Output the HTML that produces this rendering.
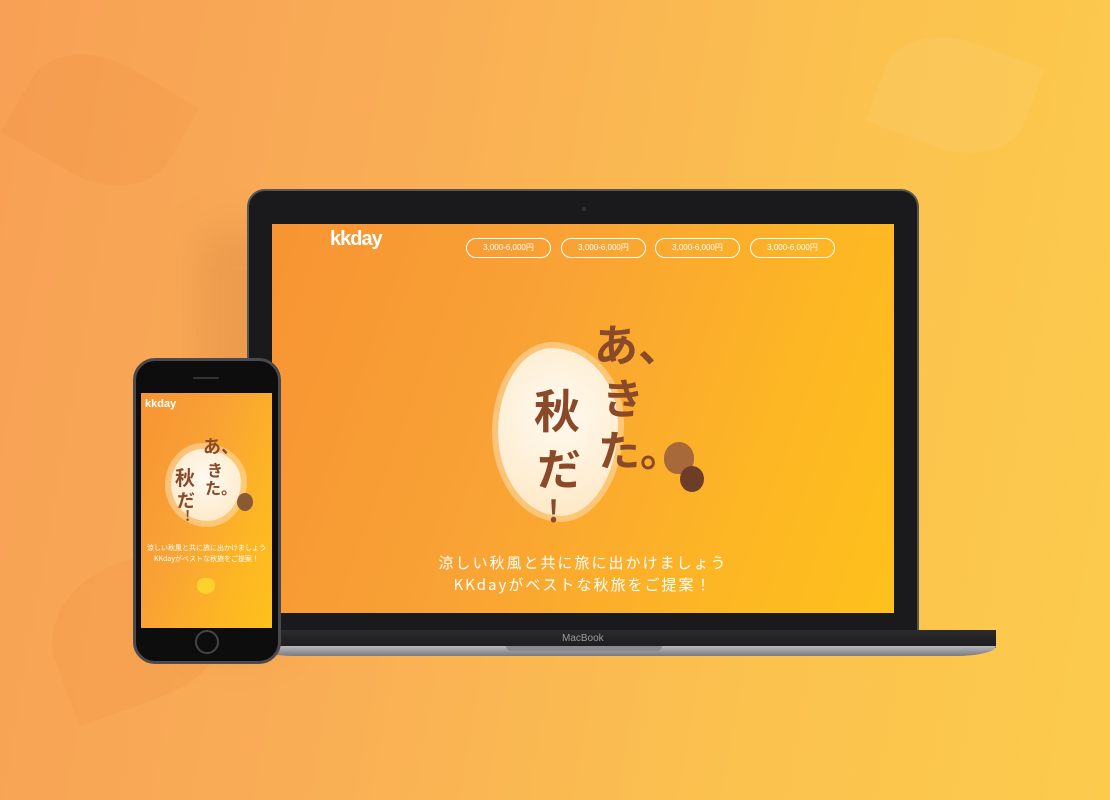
<!DOCTYPE html>
<html><head><meta charset="utf-8"><style>
*{margin:0;padding:0;box-sizing:border-box}
body{width:1110px;height:800px;overflow:hidden;position:relative;font-family:"Liberation Sans","Noto Sans CJK JP",sans-serif;
background:linear-gradient(100deg,#f8a055 0%,#f9ae55 35%,#fbc24e 70%,#fccb4c 100%);}
.abs{position:absolute}
.leaf{position:absolute;border-radius:50% 0 50% 0;background:rgba(230,120,40,.10)}
.scr{background:linear-gradient(110deg,#f79433 0%,#f9a235 40%,#fdb624 75%,#fec11c 100%);overflow:hidden}
.pill{position:absolute;top:14px;width:85px;height:20px;border:1.5px solid #fff;border-radius:10px;color:#fff;font-size:8px;text-align:center;line-height:17px}
.blob{position:absolute;background:radial-gradient(circle at 50% 40%,#fffaf0,#fde6c0);border-radius:45% 55% 48% 52%/50% 45% 55% 50%;box-shadow:0 0 0 6px rgba(255,230,190,.5)}
.jp{position:absolute;color:#8a4a2a;font-family:"Noto Sans CJK JP",sans-serif;font-weight:bold;line-height:1}
</style></head><body>
<div class="leaf" style="left:20px;top:60px;width:160px;height:120px;transform:rotate(30deg)"></div>
<div class="leaf" style="left:50px;top:560px;width:180px;height:140px;transform:rotate(-20deg)"></div>
<div class="leaf" style="left:880px;top:40px;width:150px;height:110px;transform:rotate(20deg);background:rgba(255,255,255,.06)"></div>
<div class="abs" style="left:200px;top:230px;width:80px;height:420px;background:rgba(160,80,30,.15);filter:blur(20px)"></div>
<!-- laptop -->
<div class="abs" style="left:247px;top:189px;width:672px;height:448px;background:#1a1a1c;border-radius:18px 18px 0 0;border:2px solid #55555a"></div>
<div class="abs" style="left:582px;top:207px;width:4px;height:4px;border-radius:50%;background:#333"></div>
<div class="abs" style="left:256px;top:630px;width:740px;height:18px;background:linear-gradient(#2b2b2e,#1c1c1f);"></div>
<div class="abs" style="left:562px;top:633px;color:#9a9a9a;font-size:10px">MacBook</div>
<div class="abs" style="left:256px;top:646px;width:740px;height:10px;background:linear-gradient(#b9b9bd,#7a7a7e);border-radius:0 0 40px 40px/0 0 10px 10px"></div>
<div class="abs" style="left:506px;top:646px;width:156px;height:5px;background:#8c8c90;border-radius:0 0 6px 6px"></div>
<div class="abs scr" style="left:272px;top:224px;width:622px;height:389px">
 <div class="abs" style="left:58px;top:4px;color:#fff;font-size:20px;font-weight:bold;letter-spacing:-1px">kkday</div>
 <div class="pill" style="left:194px">3,000-6,000円</div>
 <div class="pill" style="left:289px">3,000-6,000円</div>
 <div class="pill" style="left:383px">3,000-6,000円</div>
 <div class="pill" style="left:478px">3,000-6,000円</div>
 <div class="blob" style="left:226px;top:124px;width:120px;height:168px"></div>
 <div class="jp" style="left:322px;top:96px;font-size:44px">あ、</div>
 <div class="jp" style="left:262px;top:162px;font-size:46px">秋</div>
 <div class="jp" style="left:330px;top:152px;font-size:42px">き</div>
 <div class="jp" style="left:326px;top:204px;font-size:42px">た。</div>
 <div class="jp" style="left:265px;top:220px;font-size:44px">だ</div>
 <div class="jp" style="left:276px;top:270px;font-size:30px">!</div>
 <div class="abs" style="left:392px;top:218px;width:30px;height:32px;border-radius:50% 50% 45% 45%;background:#a7683a"></div>
 <div class="abs" style="left:408px;top:242px;width:24px;height:26px;border-radius:50%;background:#6e3d28"></div>
 <div class="abs" style="left:0;top:328px;width:622px;text-align:center;color:#fff;font-size:15px;letter-spacing:2px;line-height:22px;font-family:'Noto Sans CJK JP',sans-serif">涼しい秋風と共に旅に出かけましょう<br>KKdayがベストな秋旅をご提案！</div>
</div>
<!-- phone -->
<div class="abs" style="left:133px;top:358px;width:148px;height:306px;background:#0d0d0e;border:3px solid #4a4a4d;border-radius:22px"></div>
<div class="abs" style="left:193px;top:377px;width:26px;height:2px;background:#333;border-radius:1px"></div>
<div class="abs" style="left:195px;top:630px;width:24px;height:24px;border:2px solid #444;border-radius:50%"></div>
<div class="abs scr" style="left:141px;top:393px;width:131px;height:235px">
 <div class="abs" style="left:4px;top:5px;color:#fff;font-size:11px;font-weight:bold">kkday</div>
 <div class="blob" style="left:30px;top:56px;width:70px;height:72px"></div>
 <div class="jp" style="left:62px;top:44px;font-size:18px">あ、</div>
 <div class="jp" style="left:34px;top:74px;font-size:20px">秋</div>
 <div class="jp" style="left:66px;top:68px;font-size:16px">き</div>
 <div class="jp" style="left:64px;top:86px;font-size:16px">た。</div>
 <div class="jp" style="left:36px;top:98px;font-size:18px">だ</div>
 <div class="jp" style="left:44px;top:116px;font-size:14px">!</div>
 <div class="abs" style="left:96px;top:100px;width:16px;height:18px;border-radius:50%;background:#8a5a35"></div>
 <div class="abs" style="left:0;top:150px;width:131px;text-align:center;color:#fff;font-size:7px;line-height:11px;font-family:'Noto Sans CJK JP',sans-serif">涼しい秋風と共に旅に出かけましょう<br>KKdayがベストな秋旅をご提案！</div>
 <div class="abs" style="left:56px;top:185px;width:18px;height:16px;background:#fdd22c;border-radius:40% 40% 50% 50%"></div>
</div>
</body></html>
